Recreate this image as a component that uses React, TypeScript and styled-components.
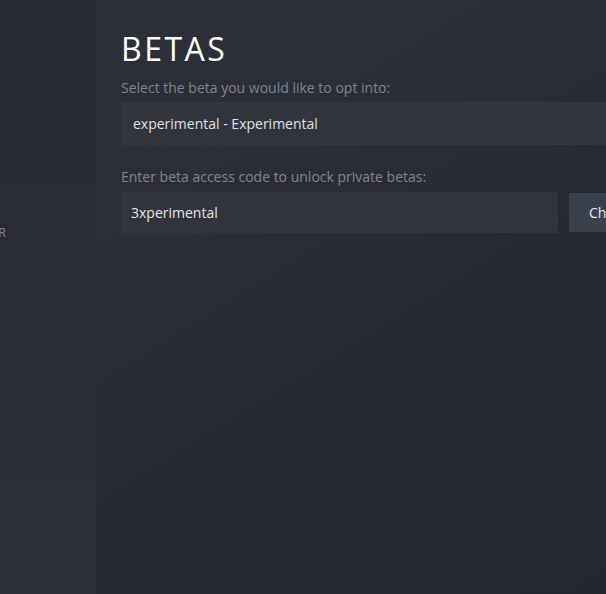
import React from "react";
import styled, { createGlobalStyle } from "styled-components";

const Global = createGlobalStyle`
  html, body { margin: 0; padding: 0; height: 100%; }
  body { background: #24272f; font-family: "Open Sans", "Liberation Sans", sans-serif; overflow: hidden; }
  #root { height: 100%; }
`;

const Page = styled.div`
  display: flex;
  width: 606px;
  height: 594px;
  overflow: hidden;
`;

const Sidebar = styled.nav`
  width: 96px;
  flex-shrink: 0;
  background: linear-gradient(180deg, #272a32 0%, #2a2d36 50%, #2c2f38 100%);
  display: flex;
  flex-direction: column;
  padding-top: 222px;
  overflow: hidden;
`;

const NavClip = styled.div`
  width: 7px;
  display: flex;
  justify-content: flex-end;
  overflow: hidden;
`;

const NavItem = styled.span`
  font-size: 13px;
  letter-spacing: 1px;
  color: #7d828b;
  white-space: nowrap;
  line-height: 20px;
  text-transform: uppercase;
`;

const Main = styled.main`
  flex: 1;
  min-width: 0;
  background: linear-gradient(148deg, #2d3039 0%, #2b2e37 30%, #262931 58%, #24272f 100%);
  padding: 28px 0 0 25px;
  display: flex;
  flex-direction: column;
  overflow: hidden;
`;

const Title = styled.h1`
  margin: 0;
  font-weight: 400;
  font-size: 32px;
  line-height: 42px;
  letter-spacing: 2.5px;
  color: #ffffff;
`;

const Label = styled.div<{ $top: number }>`
  margin-top: ${(p) => p.$top}px;
  font-size: 14px;
  line-height: 18px;
  color: #80858f;
  white-space: nowrap;
`;

const Select = styled.div`
  margin-top: 5px;
  height: 43px;
  width: 520px;
  flex-shrink: 0;
  background: #32353e;
  display: flex;
  align-items: center;
  padding-left: 12px;
  font-size: 14px;
  color: #dfe1e4;
  box-sizing: border-box;
`;

const Row = styled.div`
  margin-top: 6px;
  display: flex;
  gap: 11px;
  height: 41px;
`;

const Input = styled.div`
  width: 437px;
  flex-shrink: 0;
  background: #31343c;
  display: flex;
  align-items: center;
  padding-left: 10px;
  font-size: 14px;
  color: #e4e6e8;
  box-sizing: border-box;
`;

const Button = styled.button`
  width: 100px;
  flex-shrink: 0;
  border: none;
  margin: 1px 0;
  background: #3b414c;
  color: #e6e8ea;
  font-family: inherit;
  font-size: 14px;
  text-align: left;
  padding-left: 20px;
  white-space: nowrap;
`;

export default function App() {
  return (
    <>
      <Global />
      <Page>
        <Sidebar>
          <NavClip>
            <NavItem>Controller</NavItem>
          </NavClip>
        </Sidebar>
        <Main>
          <Title>BETAS</Title>
          <Label $top={9}>Select the beta you would like to opt into:</Label>
          <Select>experimental - Experimental</Select>
          <Label $top={23}>Enter beta access code to unlock private betas:</Label>
          <Row>
            <Input>3xperimental</Input>
            <Button>Check Code</Button>
          </Row>
        </Main>
      </Page>
    </>
  );
}
